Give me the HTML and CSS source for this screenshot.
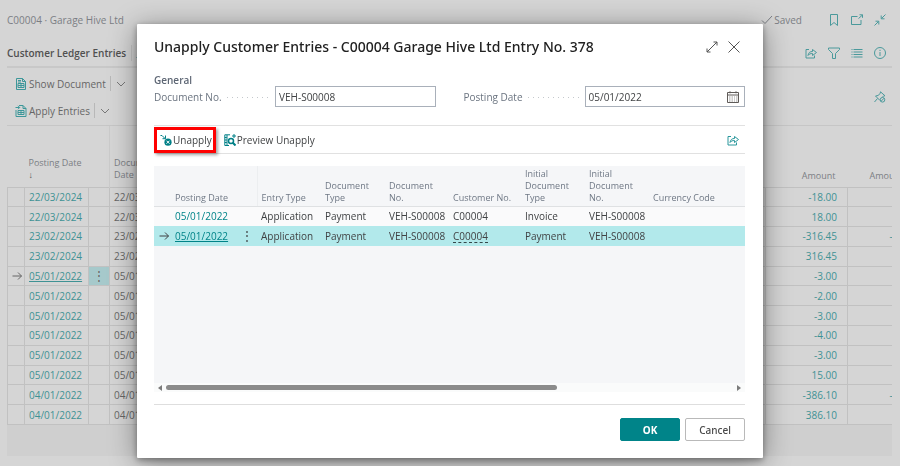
FILE: index.html
```html
<!DOCTYPE html>
<html lang="en">
<head>
<meta charset="utf-8">
<title>Customer Ledger Entries</title>
<meta name="viewport" content="width=device-width, initial-scale=1">
<link rel="stylesheet" href="styles.css">
</head>
<body>
<svg class="defs" aria-hidden="true">
  <symbol id="share" viewBox="0 0 12 12"><path d="M4 2.500H1v8.500h8.500V8.500M3 8.500C3.500 5.500 5 4.500 7.500 4.500V2.500L11.500 5.500 7.500 8.500V6.500C5.500 6.500 4 7 3 8.500Z"/></symbol>
  <symbol id="chevron" viewBox="0 0 12 12"><path d="M2 4l4 4 4-4"/></symbol>
  <symbol id="arrow" viewBox="0 0 12 12"><path d="M1.500 6h9M7 2.500L10.500 6 7 9.500"/></symbol>
</svg>

<main class="page">
  <header class="crumbs">
    <span class="crumb">C00004 · Garage Hive Ltd</span>
    <span class="saved"><svg class="icon" viewBox="0 0 12 12"><path d="M1 6.500l3 3L11 2"/></svg>Saved</span>
    <div class="icons">
      <button class="icon-button" aria-label="Bookmark"><svg class="icon" viewBox="0 0 12 12"><path d="M2.500 .5h7v11L6 8.500l-3.500 3z"/></svg></button>
      <button class="icon-button" aria-label="Open in new window"><svg class="icon" viewBox="0 0 12 12"><path d="M6.500 2.500H.5v8h9.500V6M7.500 4.500l4-3.500M8.500 .8h3v3"/></svg></button>
      <button class="icon-button" aria-label="Collapse"><svg class="icon" viewBox="0 0 12 12"><path d="M11.500 .5L7.500 4.500M7.200 1.500v3.300h3.300M.5 11.500l4-4M1.500 7.200h3.300v3.300"/></svg></button>
    </div>
  </header>

  <div class="heading">
    <h1>Customer Ledger Entries</h1>
    <button class="icon-button search" aria-label="Search"><svg class="icon" viewBox="0 0 12 12"><circle cx="7" cy="4.500" r="3.500"/><path d="M4.500 7L.5 11"/></svg></button>
    <div class="icons">
      <button class="icon-button" aria-label="Share"><svg class="icon"><use href="#share"/></svg></button>
      <button class="icon-button" aria-label="Filter"><svg class="icon" viewBox="0 0 12 12"><path d="M.5 1h11v1.500L7.500 6.500v5h-3v-5L.5 2.500z"/></svg></button>
      <button class="icon-button" aria-label="List"><svg class="icon" viewBox="0 0 12 12"><path d="M.5 2.500h1M2.500 2.500h9M.5 5h1M2.500 5h9M.5 7.500h1M2.500 7.500h9M.5 10h1M2.500 10h9"/></svg></button>
      <button class="icon-button" aria-label="Details"><svg class="icon" viewBox="0 0 12 12"><circle cx="6" cy="6" r="5.500"/><path d="M6 5v4M6 2.800v1.200"/></svg></button>
    </div>
  </div>

  <div class="actions">
    <div class="action-rows">
      <div class="split">
        <button class="action"><svg class="icon" viewBox="0 0 12 12"><path d="M1.500 .5h6l3 3v8h-9zM7.500 .5v3h3M3 4h3M3 5.500h6v4H3zM6 5.500v4M3 7.500h6M3 2.500h3"/></svg>Show Document</button>
        <button class="icon-button drop" aria-label="More document actions"><svg class="icon"><use href="#chevron"/></svg></button>
      </div>
      <div class="split">
        <button class="action"><svg class="icon" viewBox="0 0 12 12"><path d="M4 .5h4l3 3v8H1V5M8 .5v3h3M3 5.500h6v4H3zM6 5.500v4M3 7.500h6M.5 2.500h4M3 .8L4.700 2.500 3 4.200"/></svg>Apply Entries</button>
        <button class="icon-button drop" aria-label="More apply actions"><svg class="icon"><use href="#chevron"/></svg></button>
      </div>
    </div>
    <button class="icon-button" aria-label="Unpin"><svg class="icon" viewBox="0 0 12 12"><path d="M6.500 .8l4.500 4-1.500 .2-1.500 1.500M6.500 .8L6.200 2.500 4 4.500 1.500 5 6 9.500M3.500 7.500L.5 11"/><circle cx="8.500" cy="8.800" r="2.300"/><path d="M7 10.300l3-3"/></svg></button>
  </div>

  <div class="ledger-wrap">
    <table class="ledger">
      <colgroup><col class="c-mark"><col class="c-date"><col class="c-menu"><col><col class="c-amount"><col class="c-amount"></colgroup>
      <thead><tr><th></th><th>Posting Date<span class="sort">↓</span></th><th></th><th>Document<br>Date</th><th class="num">Amount</th><th class="next">Amount (LCY)</th></tr></thead>
      <tbody>
        <tr><td></td><td><a href="#">22/03/2024</a></td><td></td><td>22/03/2024</td><td class="num">-18.00</td><td></td></tr>
        <tr><td></td><td><a href="#">22/03/2024</a></td><td></td><td>22/03/2024</td><td class="num">18.00</td><td></td></tr>
        <tr><td></td><td><a href="#">23/02/2024</a></td><td></td><td>23/02/2024</td><td class="num">-316.45</td><td class="num">-316.45</td></tr>
        <tr><td></td><td><a href="#">23/02/2024</a></td><td></td><td>23/02/2024</td><td class="num">316.45</td><td></td></tr>
        <tr class="current"><td><svg class="icon"><use href="#arrow"/></svg></td><td><a href="#">05/01/2022</a></td><td class="menu"><button class="dots" aria-label="Row menu">⋮</button></td><td>05/01/2022</td><td class="num">-3.00</td><td></td></tr>
        <tr><td></td><td><a href="#">05/01/2022</a></td><td></td><td>05/01/2022</td><td class="num">-2.00</td><td></td></tr>
        <tr><td></td><td><a href="#">05/01/2022</a></td><td></td><td>05/01/2022</td><td class="num">-3.00</td><td></td></tr>
        <tr><td></td><td><a href="#">05/01/2022</a></td><td></td><td>05/01/2022</td><td class="num">-4.00</td><td></td></tr>
        <tr><td></td><td><a href="#">05/01/2022</a></td><td></td><td>05/01/2022</td><td class="num">-3.00</td><td></td></tr>
        <tr><td></td><td><a href="#">05/01/2022</a></td><td></td><td>05/01/2022</td><td class="num">15.00</td><td></td></tr>
        <tr><td></td><td><a href="#">04/01/2022</a></td><td></td><td>04/01/2022</td><td class="num">-386.10</td><td class="num">-386.10</td></tr>
        <tr><td></td><td><a href="#">04/01/2022</a></td><td></td><td>04/01/2022</td><td class="num">386.10</td><td></td></tr>
      </tbody>
    </table>
  </div>
</main>

<section class="dialog" role="dialog" aria-labelledby="dialog-title">
  <header class="dialog-head">
    <h2 id="dialog-title">Unapply Customer Entries - C00004 Garage Hive Ltd Entry No. 378</h2>
    <button class="icon-button" aria-label="Expand"><svg class="icon" viewBox="0 0 12 12"><path d="M1 11L11 1M7.500 1H11v3.500M1 7.500V11h3.500"/></svg></button>
    <button class="icon-button close" aria-label="Close"><svg class="icon" viewBox="0 0 12 12"><path d="M.5 .5l11 11M11.500 .5l-11 11"/></svg></button>
  </header>

  <h3>General</h3>
  <div class="fields">
    <div class="field">
      <label for="doc-no">Document No.</label><span class="leader"></span>
      <div class="control"><input id="doc-no" type="text" value="VEH-S00008"></div>
    </div>
    <div class="field">
      <label for="post-date">Posting Date</label><span class="leader"></span>
      <div class="control"><input id="post-date" type="text" value="05/01/2022">
        <button class="icon-button" aria-label="Choose date"><svg class="icon" viewBox="0 0 12 12"><path d="M.5 1.500h11v10H.5zM.5 4h11M3 .3v2M9 .3v2"/><path class="fine" d="M2 6h1.500M4.500 6H6M7 6h1M9 6h1.500M2 8h1.500M4.500 8H6M7 8h1M9 8h1.500M2 10h1.500M4.500 10H6M7 10h1M9 10h1.500"/></svg></button>
      </div>
    </div>
  </div>

  <div class="toolbar">
    <button class="action marked"><svg class="icon" viewBox="0 0 12 12"><path d="M.5 1.500h1.500l3 3M5.500 1.500V4.700H2.500"/><circle class="disc" cx="8" cy="8.200" r="3.600"/><path class="knock" d="M6.500 6.700l3 3M9.500 6.700l-3 3"/></svg>Unapply</button>
    <button class="action"><svg class="icon" viewBox="0 0 12 12"><path d="M6 .8H.8v10.700H5M.8 3.500h2M.8 6h2M.8 8.500h2M3 1v10M8 2h4M10 0v4"/><circle class="bold" cx="7" cy="7" r="2.500"/><path class="bold" d="M8.800 8.800l2.700 2.700"/></svg>Preview Unapply</button>
    <button class="icon-button share" aria-label="Share"><svg class="icon"><use href="#share"/></svg></button>
  </div>

  <div class="grid-area">
    <table class="entries">
      <colgroup><col class="e-mark"><col class="e-date"><col class="e-menu"><col class="e-col"><col class="e-col"><col class="e-col"><col class="e-cust"><col class="e-col"><col class="e-col"><col></colgroup>
      <thead><tr><th></th><th>Posting Date</th><th class="edge"></th><th>Entry Type</th><th>Document<br>Type</th><th>Document<br>No.</th><th>Customer No.</th><th>Initial<br>Document<br>Type</th><th>Initial<br>Document<br>No.</th><th>Currency Code</th></tr></thead>
      <tbody>
        <tr><td></td><td><a href="#">05/01/2022</a></td><td></td><td>Application</td><td>Payment</td><td>VEH-S00008</td><td>C00004</td><td>Invoice</td><td>VEH-S00008</td><td></td></tr>
        <tr class="selected"><td><svg class="icon"><use href="#arrow"/></svg></td><td><a href="#">05/01/2022</a></td><td class="menu"><button class="dots" aria-label="Row menu">⋮</button></td><td>Application</td><td>Payment</td><td>VEH-S00008</td><td><span class="lookup">C00004</span></td><td>Payment</td><td>VEH-S00008</td><td></td></tr>
      </tbody>
    </table>
  </div>
  <div class="scroll" aria-hidden="true"><span class="tip left"></span><span class="track"><span class="thumb"></span></span><span class="tip right"></span></div>

  <footer class="dialog-foot">
    <button class="btn primary">OK</button>
    <button class="btn">Cancel</button>
  </footer>
</section>
</body>
</html>
```
FILE: styles.css
```css
* { box-sizing: border-box; }
body {
  margin: 0;
  min-height: 100vh;
  background: #d5d5d5;
  color: #666;
  font: 10px/12px "Open Sans", "Noto Sans", sans-serif;
  overflow: hidden;
}
button, input { font: inherit; color: inherit; background: none; border: 0; padding: 0; margin: 0; }
h1, h2, h3 { margin: 0; font-weight: 600; }
a { color: inherit; text-decoration: none; }
table { border-collapse: collapse; table-layout: fixed; width: 100%; }
th, td { padding: 0; text-align: left; font-weight: 400; white-space: nowrap; }
.defs { position: absolute; width: 0; height: 0; }
.icon { width: 12px; height: 12px; fill: none; stroke: currentColor; stroke-width: 1; flex: none; display: block; }
.bold { stroke-width: 2; }
circle.bold { stroke-width: 1.5; }
.fine { opacity: .6; }
.disc { fill: currentColor; stroke: none; }
.knock { stroke: #fff; }
.icon-button { display: flex; align-items: center; justify-content: center; color: #4a999b; }
.icons { display: flex; gap: 11px; }
.action { display: flex; align-items: center; gap: 2px; white-space: nowrap; }
.action .icon { color: #3d9799; }

.page { display: flex; flex-direction: column; height: 100vh; padding: 0 8px 10px 7px; }
.crumbs { display: flex; align-items: center; height: 39px; padding-right: 6px; color: #7b7e84; }
.crumb { flex: 1; }
.saved { display: flex; gap: 1px; margin-right: 26px; }
.heading { display: flex; align-items: center; height: 29px; padding-right: 6px; border-bottom: 2px solid #c8c8c8; }
.heading h1 { font-size: 10px; font-weight: 600; color: #505050; padding-right: 5px; border-right: 1px solid #c4c4c4; line-height: 16px; white-space: nowrap; }
.search { margin: 0 auto 0 4px; }
.actions { display: flex; justify-content: space-between; align-items: center; padding: 2px 6px 1px 8px; border-bottom: 1px solid #c6c6c6; }
.split { display: flex; align-items: center; height: 27px; }
.drop { color: #777; border-left: 1px solid #b8b8b8; margin-left: 4px; padding-left: 4px; height: 15px; }

.ledger-wrap { flex: 1; overflow: hidden; background: #cfcfcf; }
.ledger { width: calc(100% + 38px); height: 299px; background: #d5d5d5; }
.ledger thead tr { height: 61px; }
.ledger th { color: #7b7e84; font-size: 9px; line-height: 12px; vertical-align: bottom; padding: 0 4px 6px; }
.ledger th:nth-child(3) { border-right: 1px solid #cacaca; }
.ledger th.num { padding: 0 12px 5px 0; }
.ledger th.next { padding: 0 0 5px 22px; }
.ledger td { border: 1px solid #c1c1c1; padding-left: 4px; line-height: 14px; }
.ledger td a, .ledger td.num { color: #3f9294; }
.sort { display: block; line-height: 12px; color: #555; font-weight: 700; }
.num { text-align: right; }
.ledger td.num { padding-right: 10px; }
.ledger td + .num + .num { padding-right: 5px; }
.ledger .current a, .selected a { text-decoration: underline; }
.ledger .current .menu { background: #a6c9cb; }
.ledger .current td:first-child { padding-left: 3px; }
.c-mark { width: 17px; }
.c-date { width: 64px; }
.c-menu { width: 21px; }
.c-amount { width: 82px; }
.ledger td.menu, .entries td.menu { padding: 0; text-align: center; }
.dots { display: block; width: 100%; font-size: 12px; line-height: 12px; }

.dialog {
  position: fixed;
  inset: 24px 137px 8px;
  display: flex;
  flex-direction: column;
  padding: 0 18px 17px 17px;
  background: #fff;
  color: #404244;
  border-radius: 1px;
  box-shadow: 0 2px 6px rgba(0, 0, 0, .35), 0 4px 28px rgba(0, 0, 0, .4);
}
.dialog-head { display: flex; align-items: center; height: 46px; padding-right: 5px; gap: 10px; }
.dialog-head h2 { flex: 1; font-family: "Noto Sans", "Open Sans", sans-serif; font-size: 14px; font-weight: 500; line-height: 18px; color: #212121; white-space: nowrap; }
.dialog-head .icon-button { color: #555; }
.dialog h3 { font-size: 10px; line-height: 12px; padding-top: 4px; color: #5d6674; }
.fields { display: grid; grid-template-columns: 1fr 1fr; gap: 28px; margin-bottom: 18px; }
.field { display: flex; align-items: center; color: #6b7480; white-space: nowrap; }
.leader { flex: 1; height: 2px; margin: 2px 6px 0 5px; background: repeating-linear-gradient(90deg, #c4c8cc 0 1px, transparent 1px 5px) 0 0 / 100% 1px no-repeat; }
.control { flex: 0 0 57%; display: flex; align-items: center; height: 21px; padding: 0 5px 0 3px; border: 1px solid #a9b0ba; color: #404244; }
.control input { flex: 1; min-width: 0; outline: 0; }
.control .icon-button { color: #5f5b58; }

.toolbar { display: flex; align-items: center; gap: 12px; height: 29px; padding: 0 6px; border: solid #e1e1e1; border-width: 1px 0; }
.toolbar .action { gap: 1px; }
.toolbar .action .icon { color: #007f86; }
.share { margin-left: auto; }
.toolbar .share { color: #2a979c; }
.marked { position: relative; }
.marked::after { content: ""; position: absolute; inset: -7px -4px -7px -6px; border: 3px solid #f00; box-shadow: 2px 2px 3px rgba(0, 0, 0, .35); }

.grid-area { flex: 1; margin-top: 12px; background: #f5f6f8; overflow: hidden; }
.entries thead tr { height: 40px; }
.entries th { font-size: 9px; line-height: 12px; color: #6f7885; vertical-align: bottom; padding: 0 0 2px 4px; border-bottom: 1px solid #dfe1e3; }
.entries th.edge { border-right: 1px solid #eceef0; }
.entries td { height: 20px; line-height: 14px; padding-left: 4px; }
.entries tbody tr:first-child { background: #fafafb; }
.entries a { color: #008489; }
.entries .selected { background: #b2e9eb; }
.lookup { display: inline-block; line-height: 12px; border-bottom: 1px dashed #35474a; }
.e-mark { width: 17px; }
.e-date { width: 65px; }
.e-menu { width: 21px; }
.e-col { width: 64px; }
.e-cust { width: 72px; }

.scroll { display: flex; align-items: center; gap: 4px; height: 9px; padding: 0 4px; background: #fafbfb; }
.track { flex: 1; }
.thumb { display: block; width: 69%; height: 5px; border-radius: 3px; background: #8b8b8b; }
.tip { border: 3px solid transparent; border-width: 3px 4px; }
.tip.left { border-right-color: #7b7b7b; border-left: 0; }
.tip.right { border-left-color: #7b7b7b; border-right: 0; }

.dialog-foot { display: flex; justify-content: flex-end; gap: 5px; margin-top: 12px; padding-top: 13px; border-top: 1px solid #dedede; }
.btn { width: 60px; height: 23px; border: 1px solid #b9b9b9; border-radius: 2px; font-family: "Noto Sans", "Open Sans", sans-serif; font-weight: 500; color: #4a4a4a; }
.primary { background: #008489; border-color: #008489; color: #fff; font-weight: 700; }
```
